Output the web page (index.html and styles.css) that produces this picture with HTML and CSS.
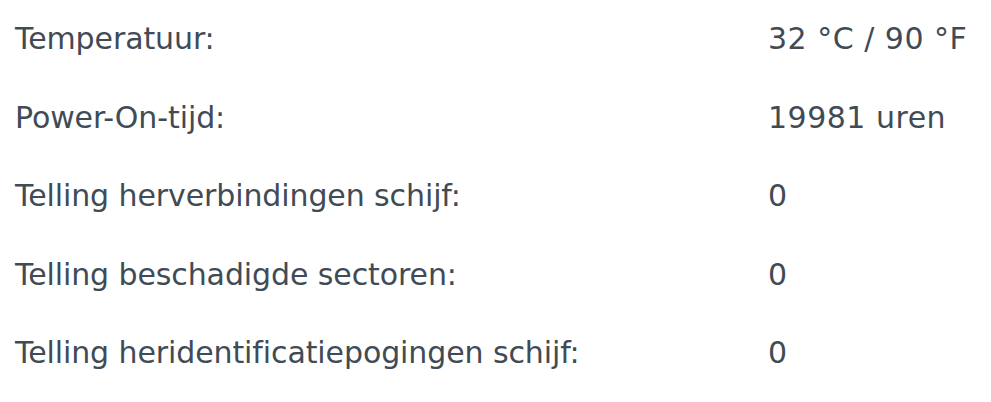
FILE: index.html
```html
<!DOCTYPE html>
<html>
<head>
<meta charset="utf-8">
<link rel="stylesheet" href="styles.css">
</head>
<body>
<div class="info">
  <div class="row"><span class="label">Temperatuur:</span><span class="value">32 °C / 90 °F</span></div>
  <div class="row"><span class="label">Power-On-tijd:</span><span class="value">19981 uren</span></div>
  <div class="row"><span class="label">Telling herverbindingen schijf:</span><span class="value">0</span></div>
  <div class="row"><span class="label">Telling beschadigde sectoren:</span><span class="value">0</span></div>
  <div class="row"><span class="label">Telling heridentificatiepogingen schijf:</span><span class="value">0</span></div>
</div>
</body>
</html>
```
FILE: styles.css
```css
html, body {
  margin: 0;
  padding: 0;
  background: #ffffff;
}
.info {
  padding: 0 0 0 15px;
  font-family: "DejaVu Sans", sans-serif;
  font-size: 30px;
  color: #414b55;
}
.row {
  display: grid;
  grid-template-columns: 753px 1fr;
  height: 78.5px;
  line-height: 78px;
  white-space: nowrap;
}
.label {
  letter-spacing: -0.1px;
}
.value {
  letter-spacing: 0.5px;
}
```
